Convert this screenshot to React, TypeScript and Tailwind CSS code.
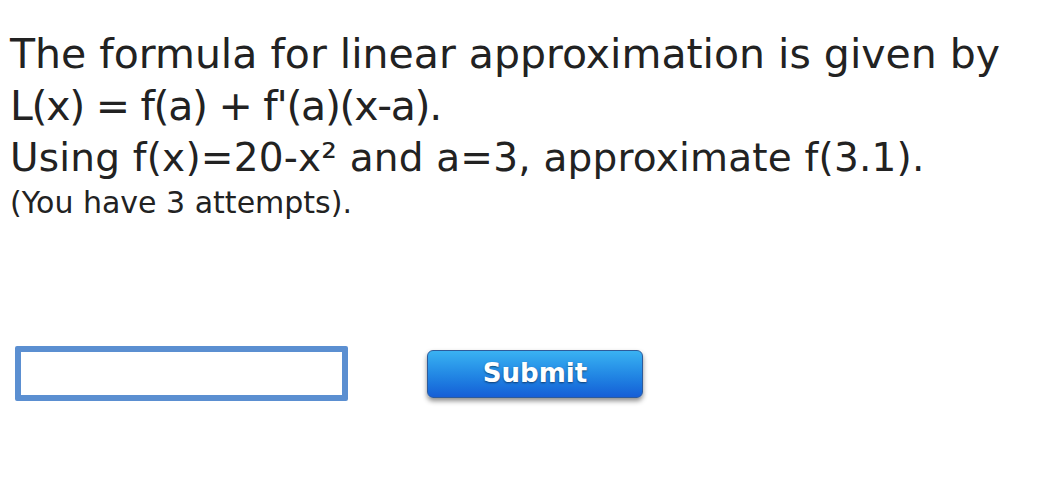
export default function App() {
  return (
    <div className="min-h-[481px] bg-white font-['DejaVu_Sans',sans-serif] text-[#222222]">
      <div className="pl-[10px] pt-[28px]">
        <p className="text-[41px] leading-[52px]">The formula for linear approximation is given by</p>
        <p className="text-[41px] leading-[52px] tracking-[-1.3px]">L(x) = f(a) + f'(a)(x-a).</p>
        <p className="text-[39px] leading-[52px] tracking-[0.2px]">Using f(x)=20-x² and a=3, approximate f(3.1).</p>
        <p className="text-[30px] leading-[38px]">(You have 3 attempts).</p>
      </div>

      <div className="mt-[124px] flex items-center gap-[79px] pl-[15px]">
        <input
          type="text"
          className="h-[55px] w-[333px] rounded-[2px] border-[6px] border-[#5b8fd1] bg-white outline-none"
        />
        <button className="h-[48px] w-[216px] rounded-[6px] border border-[#2e5b9a] bg-gradient-to-b from-[#3ab2f2] to-[#175ed6] text-[26px] font-bold text-white shadow-[0_3px_5px_rgba(0,0,0,0.45)] [text-shadow:0_1px_2px_rgba(0,0,0,0.5)]">
          Submit
        </button>
      </div>
    </div>
  );
}
